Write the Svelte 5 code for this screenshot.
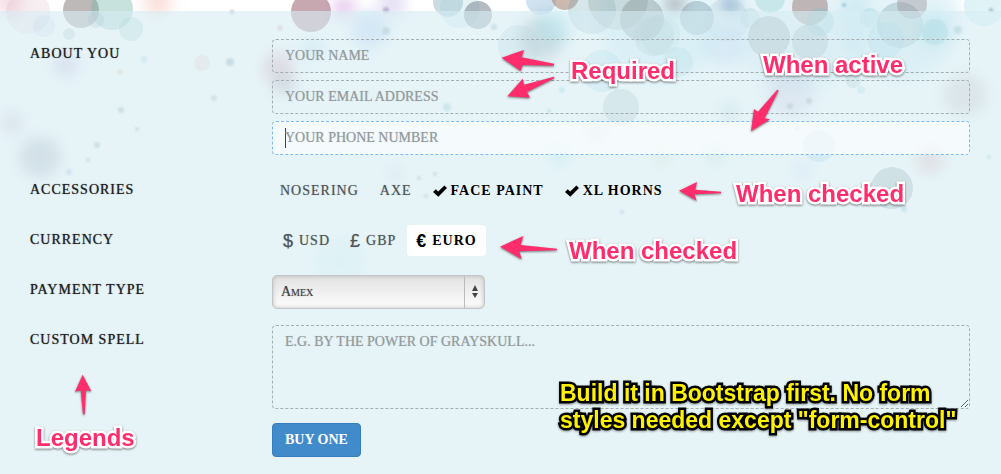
<script>
  let accessories = $state([
    { name: 'Nosering', checked: false },
    { name: 'Axe', checked: false },
    { name: 'Face paint', checked: true },
    { name: 'XL horns', checked: true }
  ]);

  const currencies = [
    { sign: '$', name: 'USD' },
    { sign: '£', name: 'GBP' },
    { sign: '€', name: 'Euro' }
  ];
  let currency = $state('Euro');

  const notes = [
    { text: 'Required', x: 571, y: 57 },
    { text: 'When active', x: 763, y: 51 },
    { text: 'When checked', x: 736, y: 180 },
    { text: 'When checked', x: 569, y: 237 },
    { text: 'Legends', x: 36, y: 424 }
  ];

  // Arrow outlines, drawn on a grid three times finer than the page.
  const arrows = [
    '1505,173 1572,150 1565,172 1662,191 1662,197 1568,195 1562,213',
    '1522,289 1568,236 1572,254 1662,230 1663,235 1581,276 1590,293',
    '2253,394 2262,327 2274,335 2332,269 2336,271 2294,355 2310,358',
    '2037,572 2091,546 2086,569 2163,575 2163,580 2083,583 2090,602',
    '1500,740 1570,708 1562,735 1671,746 1671,751 1558,754 1565,778',
    '248,1124 225,1175 242,1171 249,1243 254,1243 258,1171 274,1174'
  ];

  // x, y, radius, colour, opacity
  const discs = [
    [28, 12, 22, '#d8a8b8', 0.2],
    [44, 26, 11, '#8898b8', 0.15],
    [81, 10, 18, '#7d7474', 0.5],
    [112, 9, 21, '#74b5a8', 0.4],
    [96, 20, 8, '#778899', 0.25],
    [131, 29, 12, '#82b8b0', 0.3],
    [69, 34, 6, '#789898', 0.25],
    [311, 12, 20, '#8f5264', 0.5],
    [202, 63, 8, '#e8a090', 0.25],
    [448, 2, 15, '#80a5b5', 0.4],
    [460, 8, 20, '#9ccedc', 0.25],
    [478, 15, 14, '#6e7c86', 0.5],
    [541, 0, 15, '#8cb4d8', 0.4],
    [565, -4, 14, '#a58070', 0.55],
    [519, 46, 21, '#8cb8cc', 0.25],
    [592, 10, 24, '#76adb8', 0.3],
    [618, 0, 30, '#99a8a8', 0.35],
    [642, 19, 22, '#7f8d90', 0.4],
    [654, 36, 20, '#89aeb2', 0.25],
    [602, 71, 21, '#6fc4dc', 0.25],
    [621, 107, 18, '#7f999c', 0.3],
    [678, 62, 15, '#7fc0cc', 0.25],
    [660, 35, 20, '#98b3b3', 0.2],
    [697, 18, 17, '#7795a5', 0.4],
    [727, 20, 22, '#a0bfd2', 0.2],
    [769, 37, 21, '#7e8e93', 0.4],
    [750, 18, 10, '#8dc2c8', 0.25],
    [810, 7, 18, '#9d8480', 0.55],
    [810, 42, 18, '#859ca0', 0.35],
    [820, 22, 14, '#78bccb', 0.3],
    [770, -2, 15, '#8bd0d4', 0.35],
    [900, 25, 23, '#7ea2ac', 0.35],
    [912, 4, 15, '#958d94', 0.4],
    [886, 40, 18, '#86c8df', 0.3],
    [870, 18, 10, '#88c6d8', 0.25],
    [935, 32, 13, '#6aa9b0', 0.25],
    [984, 6, 20, '#97dce6', 0.3],
    [819, 146, 16, '#8cc2e0', 0.35],
    [892, 188, 21, '#7b8c96', 0.42],
    [853, 80, 8, '#7fa9b4', 0.3],
    [861, 90, 4, '#7fc9d4', 0.3]
  ];

  const hazes = [
    [66, 65, 12, '#a080c0', 0.35],
    [12, 123, 11, '#a878a0', 0.3],
    [40, 157, 20, '#74728c', 0.35],
    [278, 68, 16, '#c86078', 0.35],
    [284, 85, 11, '#806880', 0.35],
    [313, 49, 10, '#80c8e8', 0.4],
    [8, 2, 14, '#d880a0', 0.25],
    [158, 2, 14, '#f0a898', 0.35],
    [344, 8, 12, '#c888d8', 0.4],
    [370, 30, 18, '#80a8e8', 0.35],
    [392, 4, 14, '#a898d8', 0.3],
    [541, 39, 22, '#74858a', 0.45],
    [553, 28, 18, '#60d0e4', 0.35],
    [675, 4, 10, '#7c5860', 0.5],
    [730, 5, 9, '#3878a8', 0.6],
    [724, 46, 22, '#80a8ec', 0.25],
    [790, 92, 24, '#ac90c4', 0.28],
    [933, 31, 15, '#40c8d0', 0.4],
    [965, 95, 22, '#a88c88', 0.3],
    [930, 160, 14, '#d88484', 0.35],
    [803, 170, 6, '#7898e8', 0.4],
    [729, 112, 8, '#6898a0', 0.35],
    [715, 155, 8, '#90c888', 0.4],
    [597, 130, 10, '#b0a8b0', 0.35],
    [559, 156, 8, '#60c8cc', 0.35],
    [662, 157, 8, '#c8cc90', 0.35],
    [340, 262, 24, '#88d8d4', 0.15],
    [395, 174, 5, '#9868a0', 0.4],
    [660, 20, 60, '#88d8e8', 0.25],
    [800, 20, 70, '#88c8e0', 0.2],
    [900, 20, 60, '#78c8e0', 0.2]
  ];

  const specks = [
    [230, 62, 4, '#4c6880'],
    [121, 110, 3, '#5a8080'],
    [137, 129, 2, '#5a7080'],
    [97, 145, 3, '#608850'],
    [88, 160, 2, '#607080'],
    [69, 172, 3, '#7890c8'],
    [120, 72, 3, '#e0a870'],
    [144, 59, 3, '#78c0d8'],
    [214, 98, 3, '#8090a0'],
    [232, 12, 2, '#605878'],
    [280, 28, 3, '#d88080'],
    [386, 10, 3, '#806898'],
    [386, 31, 4, '#688898'],
    [494, 27, 3, '#609098'],
    [447, 107, 4, '#60b0a8'],
    [562, 90, 3, '#50c0cc'],
    [549, 111, 2, '#50a0a8'],
    [419, 178, 2, '#606080'],
    [435, 174, 2, '#606080'],
    [426, 196, 2, '#606080'],
    [622, 212, 2, '#7080b0'],
    [790, 106, 3, '#707080'],
    [809, 101, 3, '#607880'],
    [797, 128, 2, '#808090'],
    [844, 5, 2, '#4090b0'],
    [958, 30, 4, '#509098'],
    [991, 10, 2, '#506070'],
    [989, 157, 2, '#60a8a0'],
    [904, 209, 3, '#60a8b8']
  ];
</script>

<main class="page">
  <svg class="bokeh" aria-hidden="true">
    <defs>
      <filter id="haze" x="-100%" y="-100%" width="300%" height="300%">
        <feGaussianBlur stdDeviation="7" />
      </filter>
      <filter id="soft" x="-100%" y="-100%" width="300%" height="300%">
        <feGaussianBlur stdDeviation="1" />
      </filter>
    </defs>
    {#each hazes as [x, y, r, fill, opacity]}
      <circle cx={x} cy={y} {r} {fill} {opacity} filter="url(#haze)" />
    {/each}
    {#each discs as [x, y, r, fill, opacity]}
      <circle cx={x} cy={y} {r} {fill} {opacity} />
    {/each}
    {#each specks as [x, y, r, fill]}
      <circle cx={x} cy={y} {r} {fill} opacity="0.4" filter="url(#soft)" />
    {/each}
  </svg>

  <form class="order" onsubmit={(e) => e.preventDefault()}>
    <fieldset class="about">
      <legend>About you</legend>
      <div class="fields stack">
        <input class="form-control" type="text" placeholder="YOUR NAME" aria-label="Your name" required />
        <input class="form-control" type="email" placeholder="YOUR EMAIL ADDRESS" aria-label="Your email address" required />
        <input class="form-control active" type="tel" placeholder="YOUR PHONE NUMBER" aria-label="Your phone number" />
      </div>
    </fieldset>

    <fieldset>
      <legend>Accessories</legend>
      <div class="fields accessories">
        {#each accessories as item}
          <label class="option" class:checked={item.checked}>
            <input type="checkbox" bind:checked={item.checked} />
            {#if item.checked}
              <svg class="tick" viewBox="0 0 14 12" aria-hidden="true">
                <path d="M0 7 2.800 4.300 5.200 6.600 11.400 0.500 14 3 5.300 11.700Z" />
              </svg>
            {/if}
            <span>{item.name}</span>
          </label>
        {/each}
      </div>
    </fieldset>

    <fieldset>
      <legend>Currency</legend>
      <div class="fields currencies">
        {#each currencies as item}
          <label class="option money" class:checked={currency === item.name}>
            <input type="radio" name="currency" value={item.name} bind:group={currency} />
            <span class="sign">{item.sign}</span>
            <span>{item.name}</span>
          </label>
        {/each}
      </div>
    </fieldset>

    <fieldset>
      <legend>Payment type</legend>
      <div class="fields">
        <div class="select">
          <select aria-label="Payment type">
            <option>Amex</option>
            <option>Visa</option>
          </select>
          <svg class="stepper" viewBox="0 0 8 14" aria-hidden="true">
            <path d="M4 0 7 6H1ZM4 13 1 8H7Z" />
          </svg>
        </div>
      </div>
    </fieldset>

    <fieldset>
      <legend>Custom spell</legend>
      <div class="fields stack spell">
        <textarea class="form-control" placeholder="E.G. BY THE POWER OF GRAYSKULL..." aria-label="Custom spell"></textarea>
        <button type="submit">Buy one</button>
      </div>
    </fieldset>
  </form>

  <div class="notes">
    <svg class="arrows" viewBox="0 0 3003 1422" aria-hidden="true">
      {#each arrows as points}
        <polygon {points} />
      {/each}
    </svg>
    {#each notes as note}
      <span class="note" style="left: {note.x}px; top: {note.y}px">{note.text}</span>
    {/each}
    <p class="brief">Build it in Bootstrap first. No form<br />styles needed except "form-control"</p>
  </div>
</main>

<style>
  :global(body) {
    margin: 0;
    background: #fff;
  }

  .page {
    position: relative;
    min-height: 100vh;
    box-sizing: border-box;
    padding-top: 11px;
    overflow: hidden;
    display: flex;
    font: 14px/20px 'Liberation Serif', serif;
  }

  .bokeh {
    position: absolute;
    inset: 0;
    width: 100%;
    height: 100%;
  }

  .order {
    position: relative;
    flex: 1;
    display: flex;
    flex-direction: column;
    gap: 16px;
    padding: 28px 31px 16px 30px;
    background: rgba(213, 237, 244, 0.6);
  }

  fieldset {
    display: flex;
    min-width: 0;
    min-height: 34px;
    margin: 0;
    padding: 0;
    border: 0;
  }

  .about {
    padding-bottom: 4px;
  }

  legend {
    float: left;
    flex: none;
    box-sizing: border-box;
    width: 242px;
    padding: 5px 0 0;
    color: #222;
    letter-spacing: 1px;
    text-transform: uppercase;
    text-shadow: 0 0 1px #555;
  }

  .fields {
    flex: 1;
    min-width: 0;
  }

  .stack {
    display: flex;
    flex-direction: column;
    align-items: flex-start;
    gap: 7px;
  }

  .spell {
    gap: 14px;
  }

  .form-control {
    display: block;
    box-sizing: border-box;
    width: 100%;
    height: 34px;
    margin: 0;
    padding: 6px 12px;
    border: 1px dashed #a3afb1;
    border-radius: 4px;
    outline: 0;
    background: transparent;
    color: #444;
    font: inherit;
  }

  textarea.form-control {
    height: 84px;
    resize: both;
  }

  .form-control::placeholder {
    color: #949b9d;
    opacity: 1;
    text-shadow: 0 0 1px #b4babc;
  }

  .active {
    border-color: #7dbcf2;
    background: linear-gradient(#444, #444) 12px 6px / 1px 20px no-repeat, rgba(255, 255, 255, 0.6);
  }

  .accessories {
    display: flex;
    gap: 5px;
  }

  .currencies {
    display: flex;
    gap: 2px;
    padding-left: 2px;
  }

  .option {
    display: flex;
    align-items: center;
    box-sizing: border-box;
    height: 31px;
    padding: 0 8px;
    border-radius: 4px;
    color: #505557;
    letter-spacing: 1px;
    text-transform: uppercase;
    text-shadow: 0 0 1px #999;
  }

  .option input {
    position: absolute;
    width: 1px;
    height: 1px;
    margin: 0;
    opacity: 0;
  }

  .option.checked {
    color: #000;
    font-weight: bold;
    text-shadow: none;
  }

  .tick {
    width: 14px;
    height: 12px;
    margin-right: 4px;
  }

  .option.money {
    padding: 0 9px;
  }

  .money.checked {
    background: #fff;
  }

  .sign {
    width: 16px;
    font-family: 'Liberation Sans', sans-serif;
    font-size: 18px;
    letter-spacing: 0;
  }

  .select {
    position: relative;
    width: 213px;
  }

  select {
    display: block;
    appearance: none;
    box-sizing: border-box;
    width: 100%;
    height: 34px;
    margin: 0;
    padding: 0 28px 0 8px;
    border: 1px solid #c3c6c7;
    border-radius: 5px;
    background:
      linear-gradient(#bbb, #bbb) right 19px top / 1px 100% no-repeat,
      linear-gradient(#e2e2e2, #fdfdfd);
    box-shadow: inset 0 0 4px #bbb;
    color: #444;
    font: small-caps 14px/20px 'Liberation Serif', serif;
    text-shadow: 0 0 1px #888;
  }

  .stepper {
    position: absolute;
    top: 10px;
    right: 6px;
    width: 8px;
    height: 14px;
    fill: #444;
    pointer-events: none;
  }

  button {
    height: 34px;
    padding: 0 12px;
    border: 1px solid #357ebd;
    border-radius: 4px;
    background: #428bca;
    color: #fff;
    font: bold 14px/20px 'Liberation Serif', serif;
    text-transform: uppercase;
  }

  .notes {
    position: absolute;
    inset: 0;
    pointer-events: none;
    font-family: 'Liberation Sans', sans-serif;
    font-weight: bold;
  }

  .arrows {
    position: absolute;
    top: 0;
    left: 0;
    width: 1001px;
    height: 474px;
    fill: #ff2d6b;
    filter: drop-shadow(0 1px 1px rgba(0, 0, 0, 0.5));
  }

  .note {
    position: absolute;
    color: #ff2d6b;
    font-size: 24px;
    line-height: 28px;
    white-space: nowrap;
    -webkit-text-stroke: 5px #fff;
    paint-order: stroke fill;
    filter: drop-shadow(0 1px 1px rgba(0, 0, 0, 0.5));
  }

  .brief {
    position: absolute;
    top: 380px;
    left: 560px;
    margin: 0;
    color: #fff200;
    font-size: 23px;
    line-height: 27px;
    white-space: nowrap;
    -webkit-text-stroke: 5px #000;
    paint-order: stroke fill;
    filter: drop-shadow(0 1px 1px rgba(0, 0, 0, 0.4));
  }
</style>
